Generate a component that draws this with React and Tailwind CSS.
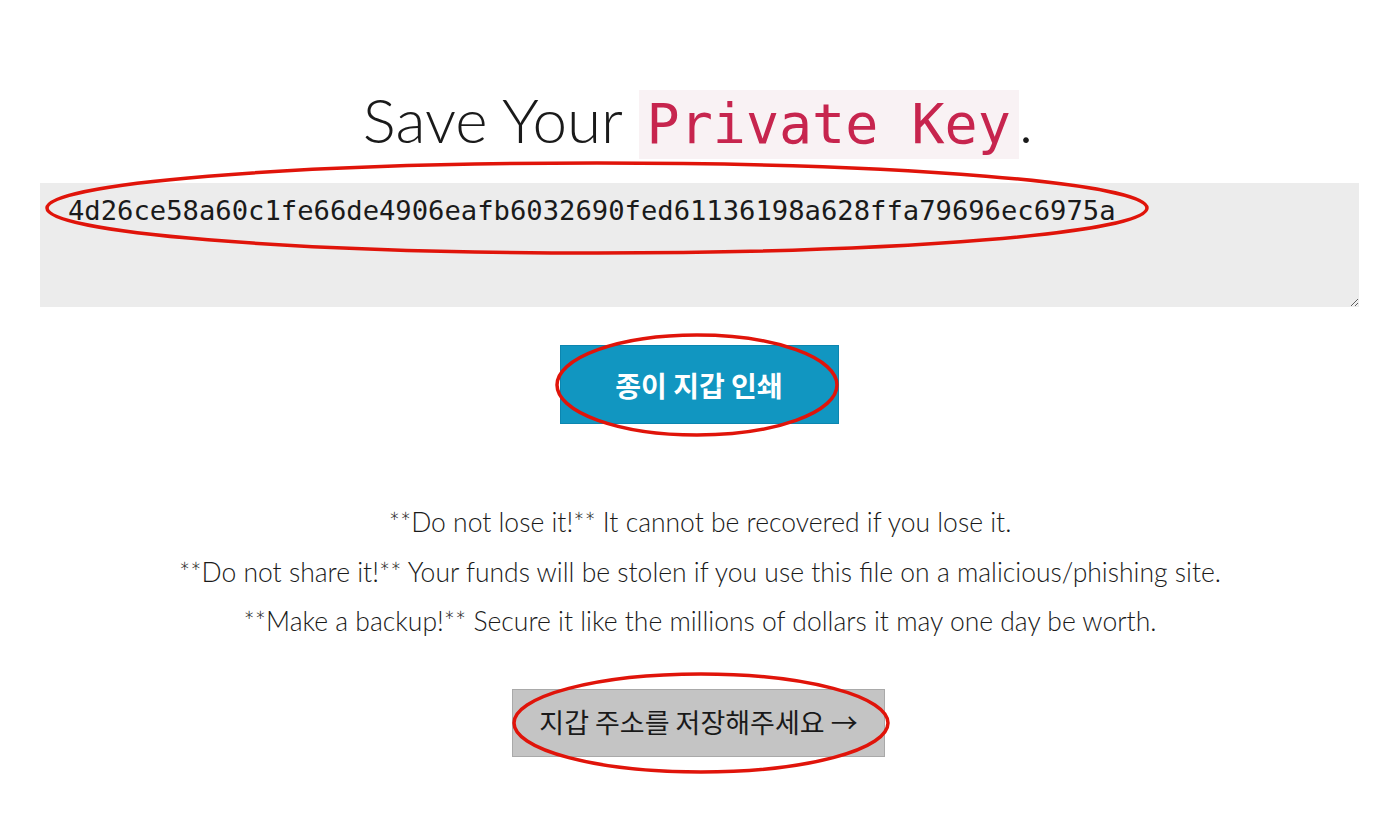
import React from "react";

const KEY = "4d26ce58a60c1fe66de4906eafb6032690fed61136198a628ffa79696ec6975a";

export default function App() {
  return (
    <div className="relative w-[1400px] h-[826px] bg-white overflow-hidden">
      <div className="flex flex-col items-center pt-[88px]">
        <h1 className="flex items-baseline justify-center text-[62px] font-light text-[#1a1a1a] leading-none font-['Lato','Noto_Sans',sans-serif] ml-[-4px]">
          <span>Save Your&nbsp;</span>
          <code className="bg-[#f9f2f4] text-[#c7254e] text-[55px] px-[8px] py-[8px] leading-[53px] font-normal font-['DejaVu_Sans_Mono',monospace]">
            Private Key
          </code>
          <span>.</span>
        </h1>

        <textarea
          readOnly
          defaultValue={KEY}
          className="mt-[24px] w-[1319px] h-[124px] bg-[#ececec] text-[27.2px] text-[#1a1a1a] pl-[28px] pt-[8px] outline-none border-0 self-start ml-[40px] font-['DejaVu_Sans_Mono',monospace]"
        />

        <button className="mt-[38px] ml-[-2px] w-[279px] h-[79px] bg-[#1196c1] border border-[#0c86b0] text-white text-[28px] font-bold font-['Noto_Sans_CJK_KR',sans-serif]">
          종이 지갑 인쇄
        </button>

        <div className="mt-[74px] flex flex-col items-center text-[26.5px] font-light text-[#1a1a1a] leading-[49.5px] font-['Lato','Noto_Sans',sans-serif]">
          <p>**Do not lose it!** It cannot be recovered if you lose it.</p>
          <p>**Do not share it!** Your funds will be stolen if you use this file on a malicious/phishing site.</p>
          <p>**Make a backup!** Secure it like the millions of dollars it may one day be worth.</p>
        </div>

        <button className="mt-[42px] w-[373px] h-[68px] bg-[#c4c4c4] border border-[#a9a9a9] text-[#1a1a1a] text-[27px] font-normal ml-[-3px] font-['Noto_Sans_CJK_KR',sans-serif]">
          지갑 주소를 저장해주세요 →
        </button>
      </div>

      <svg className="absolute inset-0 pointer-events-none" width="1400" height="826" viewBox="0 0 1400 826">
        <g fill="none" stroke="#e0140a" strokeWidth="3.5">
          <ellipse cx="597" cy="208" rx="550" ry="45" />
          <ellipse cx="697" cy="385" rx="140" ry="50" />
          <ellipse cx="701" cy="723" rx="187" ry="49" />
        </g>
      </svg>
    </div>
  );
}
